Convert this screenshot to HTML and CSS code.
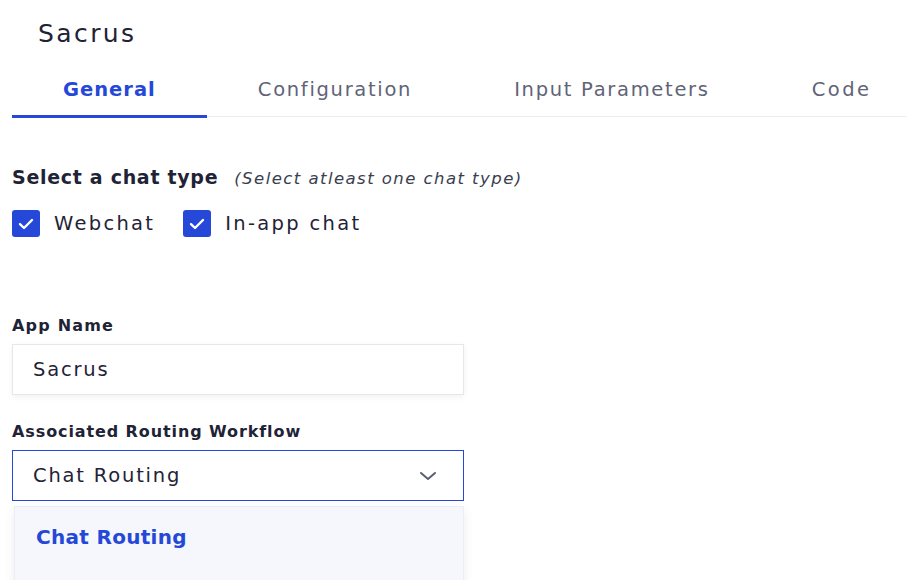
FILE: index.html
```html
<!DOCTYPE html>
<html lang="en">
<head>
    <meta charset="UTF-8">
    <title>Sacrus</title>
    <link rel="stylesheet" href="styles.css">
</head>
<body>
    <div class="page">
        <h1 class="app-title">Sacrus</h1>

        <div class="tabs">
            <div class="tab active">General</div>
            <div class="tab">Configuration</div>
            <div class="tab">Input Parameters</div>
            <div class="tab last">Code</div>
        </div>

        <div class="section">
            <div class="section-title">
                <span class="title-main">Select a chat type</span>
                <span class="title-hint">(Select atleast one chat type)</span>
            </div>
            <div class="checks">
                <label class="check">
                    <span class="box">
                        <svg width="16" height="12" viewBox="0 0 16 12"><path d="M2 6.2l4 3.8 8-8" fill="none" stroke="#fff" stroke-width="2.4" stroke-linecap="round" stroke-linejoin="round"/></svg>
                    </span>
                    Webchat
                </label>
                <label class="check">
                    <span class="box">
                        <svg width="16" height="12" viewBox="0 0 16 12"><path d="M2 6.2l4 3.8 8-8" fill="none" stroke="#fff" stroke-width="2.4" stroke-linecap="round" stroke-linejoin="round"/></svg>
                    </span>
                    In-app chat
                </label>
            </div>
        </div>

        <div class="field">
            <div class="field-label">App Name</div>
            <div class="input">Sacrus</div>
        </div>

        <div class="field">
            <div class="field-label long">Associated Routing Workflow</div>
            <div class="select">
                <span>Chat Routing</span>
                <svg width="18" height="10" viewBox="0 0 18 10"><path d="M2 2l7 6 7-6" fill="none" stroke="#5a5f70" stroke-width="2" stroke-linecap="round" stroke-linejoin="round"/></svg>
            </div>
            <div class="dropdown">
                <div class="option">Chat Routing</div>
            </div>
        </div>
    </div>
</body>
</html>
```

FILE: styles.css
```css
:root {
    --blue: #2548d8;
    --text: #1f2336;
    --muted: #5f6477;
}

* {
    box-sizing: border-box;
    margin: 0;
    padding: 0;
}

body {
    font-family: 'DejaVu Sans', Arial, sans-serif;
    color: var(--text);
    background: white;
    overflow: hidden;
}

.page {
    padding-left: 12px;
}

.app-title {
    font-size: 25px;
    font-weight: 400;
    line-height: 32px;
    letter-spacing: 2.4px;
    padding: 18px 0 0 26px;
}

.tabs {
    display: flex;
    margin-top: 26px;
    border-bottom: 1px solid #ececf0;
}

.tab {
    padding: 0 51px 11px;
    font-size: 19.5px;
    line-height: 28px;
    letter-spacing: 1.7px;
    color: var(--muted);
    white-space: nowrap;
    border-bottom: 3px solid transparent;
    margin-bottom: -2px;
}

.tab.active {
    color: var(--blue);
    font-weight: 700;
    letter-spacing: 1px;
    border-bottom-color: var(--blue);
}

.tab.last {
    letter-spacing: 2.5px;
}

.section {
    margin-top: 49px;
}

.section-title {
    display: flex;
    align-items: baseline;
    gap: 16px;
}

.title-main {
    font-size: 19px;
    font-weight: 700;
    letter-spacing: 0.7px;
}

.title-hint {
    font-size: 16.5px;
    font-style: italic;
    letter-spacing: 1.45px;
    color: #3a3e50;
}

.checks {
    display: flex;
    gap: 28px;
    margin-top: 22px;
}

.check {
    display: flex;
    align-items: center;
    gap: 14px;
    font-size: 19.5px;
    letter-spacing: 2.3px;
}

.box {
    width: 28px;
    height: 27px;
    background: var(--blue);
    border-radius: 3px;
    display: flex;
    align-items: center;
    justify-content: center;
}

.field {
    width: 452px;
}

.field + .field {
    margin-top: 26px;
}

.section + .field {
    margin-top: 78px;
}

.field-label {
    font-size: 16px;
    font-weight: 700;
    line-height: 22px;
    letter-spacing: 1.2px;
}

.field-label.long {
    letter-spacing: 0.9px;
}

.input,
.select {
    margin-top: 7px;
    height: 51px;
    display: flex;
    align-items: center;
    padding: 0 20px;
    font-size: 19.5px;
    letter-spacing: 1.8px;
    background: white;
}

.input {
    border: 1px solid #e6e7eb;
    box-shadow: 0 2px 6px rgba(0, 0, 0, 0.06);
}

.select {
    border: 1px solid var(--blue);
    justify-content: space-between;
    padding-right: 26px;
}

.dropdown {
    margin: 5px 0 0 2px;
    background: #f5f7fc;
    border: 1px solid #eceef4;
    box-shadow: 0 4px 10px rgba(0, 0, 0, 0.08);
    height: 90px;
}

.option {
    padding: 18px 21px;
    font-size: 20px;
    font-weight: 700;
    letter-spacing: 0.3px;
    color: var(--blue);
}
```
